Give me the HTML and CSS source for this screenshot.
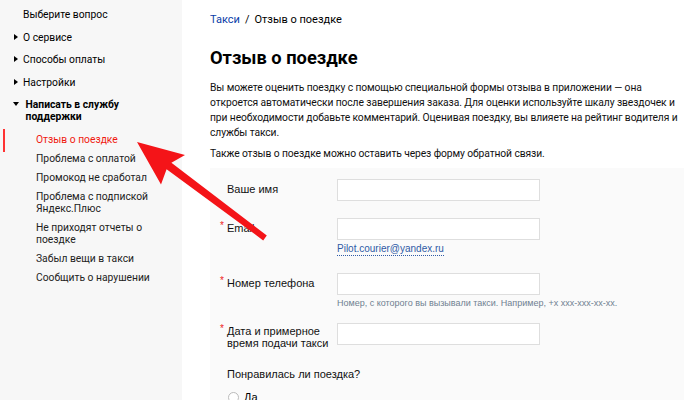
FILE: index.html
```html
<!DOCTYPE html>
<html lang="ru">
<head>
<meta charset="utf-8">
<title>Отзыв о поездке</title>
<link rel="stylesheet" href="styles.css">
</head>
<body>
<div class="page">
  <aside class="sidebar">
    <div class="side-title">Выберите вопрос</div>
    <ul class="menu">
      <li class="item collapsed">О сервисе</li>
      <li class="item collapsed">Способы оплаты</li>
      <li class="item collapsed">Настройки</li>
      <li class="item expanded">
        <span class="item-label">Написать в службу<br>поддержки</span>
        <ul class="sub">
          <li class="sub-item active">Отзыв о поездке</li>
          <li class="sub-item">Проблема с оплатой</li>
          <li class="sub-item">Промокод не сработал</li>
          <li class="sub-item">Проблема с подпиской<br>Яндекс.Плюс</li>
          <li class="sub-item">Не приходят отчеты о<br>поездке</li>
          <li class="sub-item">Забыл вещи в такси</li>
          <li class="sub-item">Сообщить о нарушении</li>
        </ul>
      </li>
    </ul>
  </aside>

  <main class="content">
    <nav class="crumbs"><a class="crumb-link" href="#">Такси</a><span class="crumb-sep">/</span><span>Отзыв о поездке</span></nav>
    <h1 class="title">Отзыв о поездке</h1>
    <p class="text">Вы можете оценить поездку с помощью специальной формы отзыва в приложении — она откроется автоматически после завершения заказа. Для оценки используйте шкалу звездочек и при необходимости добавьте комментарий. Оценивая поездку, вы влияете на рейтинг водителя и службы такси.</p>
    <p class="text text-second">Также отзыв о поездке можно оставить через форму обратной связи.</p>

    <form class="form">
      <div class="row">
        <label class="label">Ваше имя</label>
        <div class="field"><input class="input" type="text"></div>
      </div>
      <div class="row">
        <label class="label"><span class="req">*</span>Email</label>
        <div class="field">
          <input class="input" type="text">
          <a class="suggest" href="#">Pilot.courier@yandex.ru</a>
        </div>
      </div>
      <div class="row row-phone">
        <label class="label"><span class="req">*</span>Номер телефона</label>
        <div class="field">
          <input class="input" type="text">
          <div class="hint">Номер, с которого вы вызывали такси. Например, +x xxx-xxx-xx-xx.</div>
        </div>
      </div>
      <div class="row row-date">
        <label class="label"><span class="req">*</span>Дата и примерное<br>время подачи такси</label>
        <div class="field"><input class="input" type="text"></div>
      </div>
      <div class="question">Понравилась ли поездка?</div>
      <label class="radio-row"><span class="radio"></span>Да</label>
    </form>
  </main>

  <svg class="arrow" width="700" height="400" viewBox="0 0 700 400" aria-hidden="true">
    <polygon points="137,142 185,155 171.4,162.8 266.8,235.6 263.2,240.4 166.6,169.2 161,184.5" fill="#f41418"/>
  </svg>
</div>
</body>
</html>
```

FILE: styles.css
```css
* { box-sizing: border-box; }

html, body {
  margin: 0;
  padding: 0;
  background: #fff;
}

body {
  font-family: Roboto, "Liberation Sans", Arial, sans-serif;
  color: #000;
  width: 700px;
  height: 400px;
  overflow: hidden;
}

.page {
  position: relative;
  display: flex;
  height: 400px;
}

/* Sidebar */
.sidebar {
  width: 182px;
  flex: 0 0 182px;
  background: #f7f7f7;
  padding: 9px 0 0 23px;
  font-size: 10.3px;
  line-height: 12px;
  color: #000;
}

.side-title {
  margin-bottom: 10.5px;
}

.menu, .sub {
  list-style: none;
  margin: 0;
  padding: 0;
}

.menu {
  display: flex;
  flex-direction: column;
  gap: 10.5px;
}

.item::before {
  content: "";
  display: inline-block;
  width: 0;
  height: 0;
  margin-left: -9px;
  margin-right: 5px;
  vertical-align: 1px;
}

.collapsed::before {
  border-top: 3px solid transparent;
  border-bottom: 3px solid transparent;
  border-left: 4px solid #000;
}

.expanded::before {
  border-left: 3px solid transparent;
  border-right: 3px solid transparent;
  border-top: 4px solid #000;
  margin-left: -10px;
  margin-right: 4px;
  vertical-align: 2px;
}

.expanded .item-label {
  font-weight: bold;
  display: inline-block;
  vertical-align: top;
}

.sub {
  display: flex;
  flex-direction: column;
  gap: 7px;
  margin-top: 11px;
  padding-left: 13px;
  color: #222;
}

.sub-item.active {
  position: relative;
  color: #f0190f;
}

.sub-item.active::before {
  content: "";
  position: absolute;
  left: -33px;
  top: -5px;
  width: 2px;
  height: 23px;
  background: #f33;
}

/* Content */
.content {
  flex: 1;
  padding: 13px 16px 0 28px;
}

.crumbs {
  font-size: 11px;
  line-height: 14px;
  color: #000;
}

.crumb-link {
  color: #0a3ca8;
  text-decoration: none;
}

.crumb-sep {
  margin: 0 5px;
}

.title {
  font-size: 18.3px;
  line-height: 24px;
  font-weight: bold;
  margin: 19px 0 0;
  color: #000;
}

.text {
  font-size: 10.3px;
  letter-spacing: -0.1px;
  line-height: 15px;
  margin: 9.5px 0 0;
  width: 470px;
  color: #111;
}

.text-second {
  margin-top: 6px;
}

/* Form */
.form {
  margin-top: 7.5px;
  width: 474px;
  background: #fafafa;
  padding: 11px 0 0 17px;
  font-family: "Liberation Sans", Arial, sans-serif;
  font-size: 11px;
  line-height: 13px;
  display: flex;
  flex-direction: column;
}

.row {
  display: grid;
  grid-template-columns: 110px 203px;
  margin-bottom: 17px;
}

.row-phone {
  margin-bottom: 14px;
}

.label {
  padding-top: 4px;
  color: #111;
}

.row-date .label {
  line-height: 12px;
  padding-top: 2px;
}

.req {
  display: inline-block;
  width: 7px;
  margin-left: -7px;
  color: #e22;
  font-size: 10px;
  vertical-align: 3px;
  line-height: 8px;
}

.input {
  display: block;
  width: 203px;
  height: 22px;
  border: 1px solid #dedede;
  background: #fff;
  margin: 0;
  padding: 0 4px;
  font: inherit;
}

.suggest {
  display: inline-block;
  margin-top: 3px;
  font-size: 10px;
  line-height: 12px;
  color: #2f5ba6;
  text-decoration: none;
  border-bottom: 1px dotted #2f5ba6;
  white-space: nowrap;
}

.hint {
  margin-top: 2px;
  font-size: 9px;
  line-height: 12px;
  color: #6f8191;
  white-space: nowrap;
}

.question {
  margin-top: 0;
  line-height: 16px;
  font-size: 11px;
  color: #111;
}

.radio-row {
  display: flex;
  align-items: center;
  gap: 5px;
  margin-top: 8px;
  font-size: 11px;
  line-height: 14px;
}

.radio {
  width: 11px;
  height: 11px;
  border: 1px solid #bbb;
  border-radius: 50%;
  background: #fff;
  margin-left: 1px;
}

/* Overlay annotation arrow */
.arrow {
  position: absolute;
  left: 0;
  top: 0;
  pointer-events: none;
}
```
